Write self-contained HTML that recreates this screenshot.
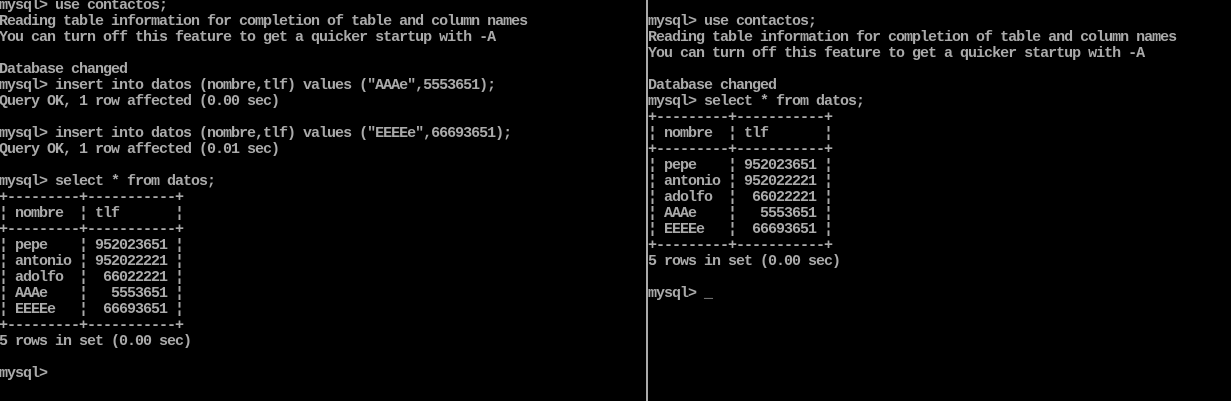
<!DOCTYPE html>
<html><head><meta charset="utf-8"><style>
html,body{margin:0;padding:0;background:#000;width:1231px;height:401px;overflow:hidden;position:relative}
pre{position:absolute;margin:0;font-family:"Liberation Mono",monospace;font-size:15px;letter-spacing:-1px;line-height:16px;color:#aaa;white-space:pre;font-weight:bold}
#l{left:-1px;top:-2px}
#r{left:648px;top:14px}
#d{position:absolute;left:646px;top:0;width:2px;height:401px;background:#aaa}
</style></head><body>
<pre id="l">mysql&gt; use contactos;
Reading table information for completion of table and column names
You can turn off this feature to get a quicker startup with -A

Database changed
mysql&gt; insert into datos (nombre,tlf) values ("AAAe",5553651);
Query OK, 1 row affected (0.00 sec)

mysql&gt; insert into datos (nombre,tlf) values ("EEEEe",66693651);
Query OK, 1 row affected (0.01 sec)

mysql&gt; select * from datos;
+---------+-----------+
¦ nombre  ¦ tlf       ¦
+---------+-----------+
¦ pepe    ¦ 952023651 ¦
¦ antonio ¦ 952022221 ¦
¦ adolfo  ¦  66022221 ¦
¦ AAAe    ¦   5553651 ¦
¦ EEEEe   ¦  66693651 ¦
+---------+-----------+
5 rows in set (0.00 sec)

mysql&gt;</pre>
<div id="d"></div>
<pre id="r">mysql&gt; use contactos;
Reading table information for completion of table and column names
You can turn off this feature to get a quicker startup with -A

Database changed
mysql&gt; select * from datos;
+---------+-----------+
¦ nombre  ¦ tlf       ¦
+---------+-----------+
¦ pepe    ¦ 952023651 ¦
¦ antonio ¦ 952022221 ¦
¦ adolfo  ¦  66022221 ¦
¦ AAAe    ¦   5553651 ¦
¦ EEEEe   ¦  66693651 ¦
+---------+-----------+
5 rows in set (0.00 sec)

mysql&gt; _</pre>
</body></html>
